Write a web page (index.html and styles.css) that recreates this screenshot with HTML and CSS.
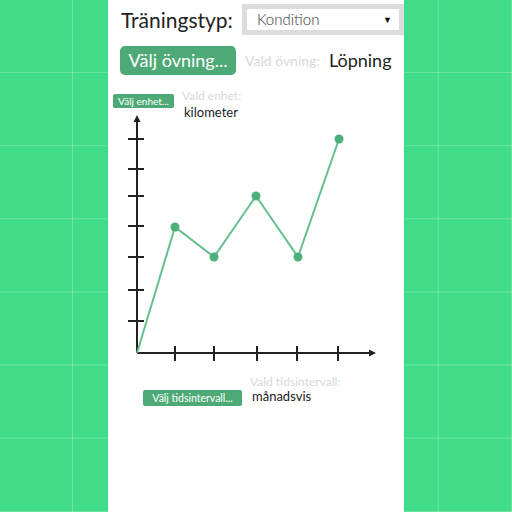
FILE: index.html
```html
<!DOCTYPE html>
<html>
<head>
<meta charset="utf-8">
<link rel="stylesheet" href="styles.css">
</head>
<body>
<div class="panel">
  <div class="type-row">
    <span class="type-label">Träningstyp:</span>
    <div class="select"><span>Kondition</span><span class="caret">▼</span></div>
  </div>
  <div class="ex-row">
    <button class="btn btn-big">Välj övning...</button>
    <span class="muted ex-muted">Vald övning:</span>
    <span class="ex-value">Löpning</span>
  </div>
  <div class="unit-row">
    <button class="btn btn-small">Välj enhet...</button>
    <div class="stack">
      <span class="muted small-muted">Vald enhet:</span>
      <span class="small-value unit-value">kilometer</span>
    </div>
  </div>
  <svg class="chart" width="296" height="252" viewBox="0 0 296 252">
    <g stroke="#222" stroke-width="2" fill="none">
      <line x1="29" y1="6" x2="29" y2="238"/>
      <line x1="29" y1="238" x2="263" y2="238"/>
      <line x1="20" y1="24" x2="36" y2="24"/>
      <line x1="20" y1="54" x2="36" y2="54"/>
      <line x1="20" y1="81" x2="36" y2="81"/>
      <line x1="20" y1="111" x2="36" y2="111"/>
      <line x1="20" y1="142" x2="36" y2="142"/>
      <line x1="20" y1="175" x2="36" y2="175"/>
      <line x1="20" y1="206" x2="36" y2="206"/>
      <line x1="67" y1="231" x2="67" y2="246"/>
      <line x1="106" y1="231" x2="106" y2="246"/>
      <line x1="149" y1="231" x2="149" y2="246"/>
      <line x1="189" y1="231" x2="189" y2="246"/>
      <line x1="230" y1="231" x2="230" y2="246"/>
    </g>
    <polygon points="29,0 25.5,7 32.5,7" fill="#222"/>
    <polygon points="268,238 261,234.5 261,241.5" fill="#222"/>
    <polyline points="29,238 67,112 106,142 148,81 190,142 231,24" fill="none" stroke="#63c08e" stroke-width="2"/>
    <g fill="#4db07c">
      <circle cx="67" cy="112" r="4.5"/>
      <circle cx="106" cy="142" r="4.5"/>
      <circle cx="148" cy="81" r="4.5"/>
      <circle cx="190" cy="142" r="4.5"/>
      <circle cx="231" cy="24" r="4.5"/>
    </g>
  </svg>
  <div class="time-row">
    <button class="btn btn-time">Välj tidsintervall...</button>
    <div class="stack">
      <span class="muted small-muted">Vald tidsintervall:</span>
      <span class="small-value">månadsvis</span>
    </div>
  </div>
</div>
</body>
</html>
```
FILE: styles.css
```css
html, body {
  margin: 0;
  padding: 0;
  height: 512px;
  overflow: hidden;
}
body {
  background-color: #41dc87;
  background-image:
    linear-gradient(to right, rgba(255,255,255,0.22) 1px, transparent 1px),
    linear-gradient(to bottom, rgba(255,255,255,0.22) 1px, transparent 1px);
  background-size: 73.142857px 73.142857px;
  background-position: 72px 72px;
  font-family: Lato, "Open Sans", sans-serif;
}
.panel {
  margin-left: 108px;
  width: 296px;
  height: 512px;
  background: #fff;
  display: flex;
  flex-direction: column;
}
.type-row {
  display: flex;
  align-items: center;
  height: 38px;
  padding-left: 13px;
  gap: 9px;
}
.type-label {
  font-size: 21px;
  color: #222;
}
.select {
  box-sizing: border-box;
  width: 163px;
  height: 31px;
  border: 5px solid #dcdcdc;
  display: flex;
  align-items: center;
  justify-content: space-between;
  padding: 0 7px 0 10px;
  font-size: 15px;
  font-weight: 300;
  color: #333;
}
.caret {
  font-size: 9px;
  color: #111;
  font-weight: 400;
}
.ex-row {
  display: flex;
  align-items: center;
  height: 30px;
  margin-top: 7px;
  padding-left: 12px;
}
.btn {
  border: none;
  background: #4daa76;
  color: #fff;
  font-family: Lato, "Open Sans", sans-serif;
  border-radius: 4px;
  padding: 0;
  cursor: pointer;
}
.btn-big {
  width: 116px;
  height: 29px;
  font-size: 18px;
  border-radius: 5px;
}
.muted {
  color: #d8d8d8;
}
.ex-muted {
  font-size: 14px;
  margin-left: 9px;
}
.ex-value {
  font-size: 18px;
  color: #222;
  margin-left: 9px;
}
.unit-row {
  display: flex;
  align-items: flex-start;
  height: 25px;
  margin-top: 15px;
  padding-left: 5px;
}
.btn-small {
  width: 61px;
  height: 14px;
  margin-top: 4px;
  font-size: 10px;
  border-radius: 2px;
  line-height: 14px;
}
.stack {
  display: flex;
  flex-direction: column;
  margin-left: 8px;
}
.small-muted {
  font-size: 12px;
  line-height: 12px;
}
.small-value {
  font-size: 13px;
  line-height: 16px;
  color: #222;
  padding-left: 2px;
}
.unit-value {
  margin-top: 2px;
}
.chart {
  display: block;
}
.time-row {
  display: flex;
  align-items: flex-start;
  margin-top: 9px;
  padding-left: 35px;
}
.btn-time {
  width: 99px;
  height: 16px;
  margin-top: 14px;
  font-size: 10.5px;
  line-height: 16px;
  border-radius: 2px;
}
.time-row .stack {
  margin-left: 8px;
}
```
